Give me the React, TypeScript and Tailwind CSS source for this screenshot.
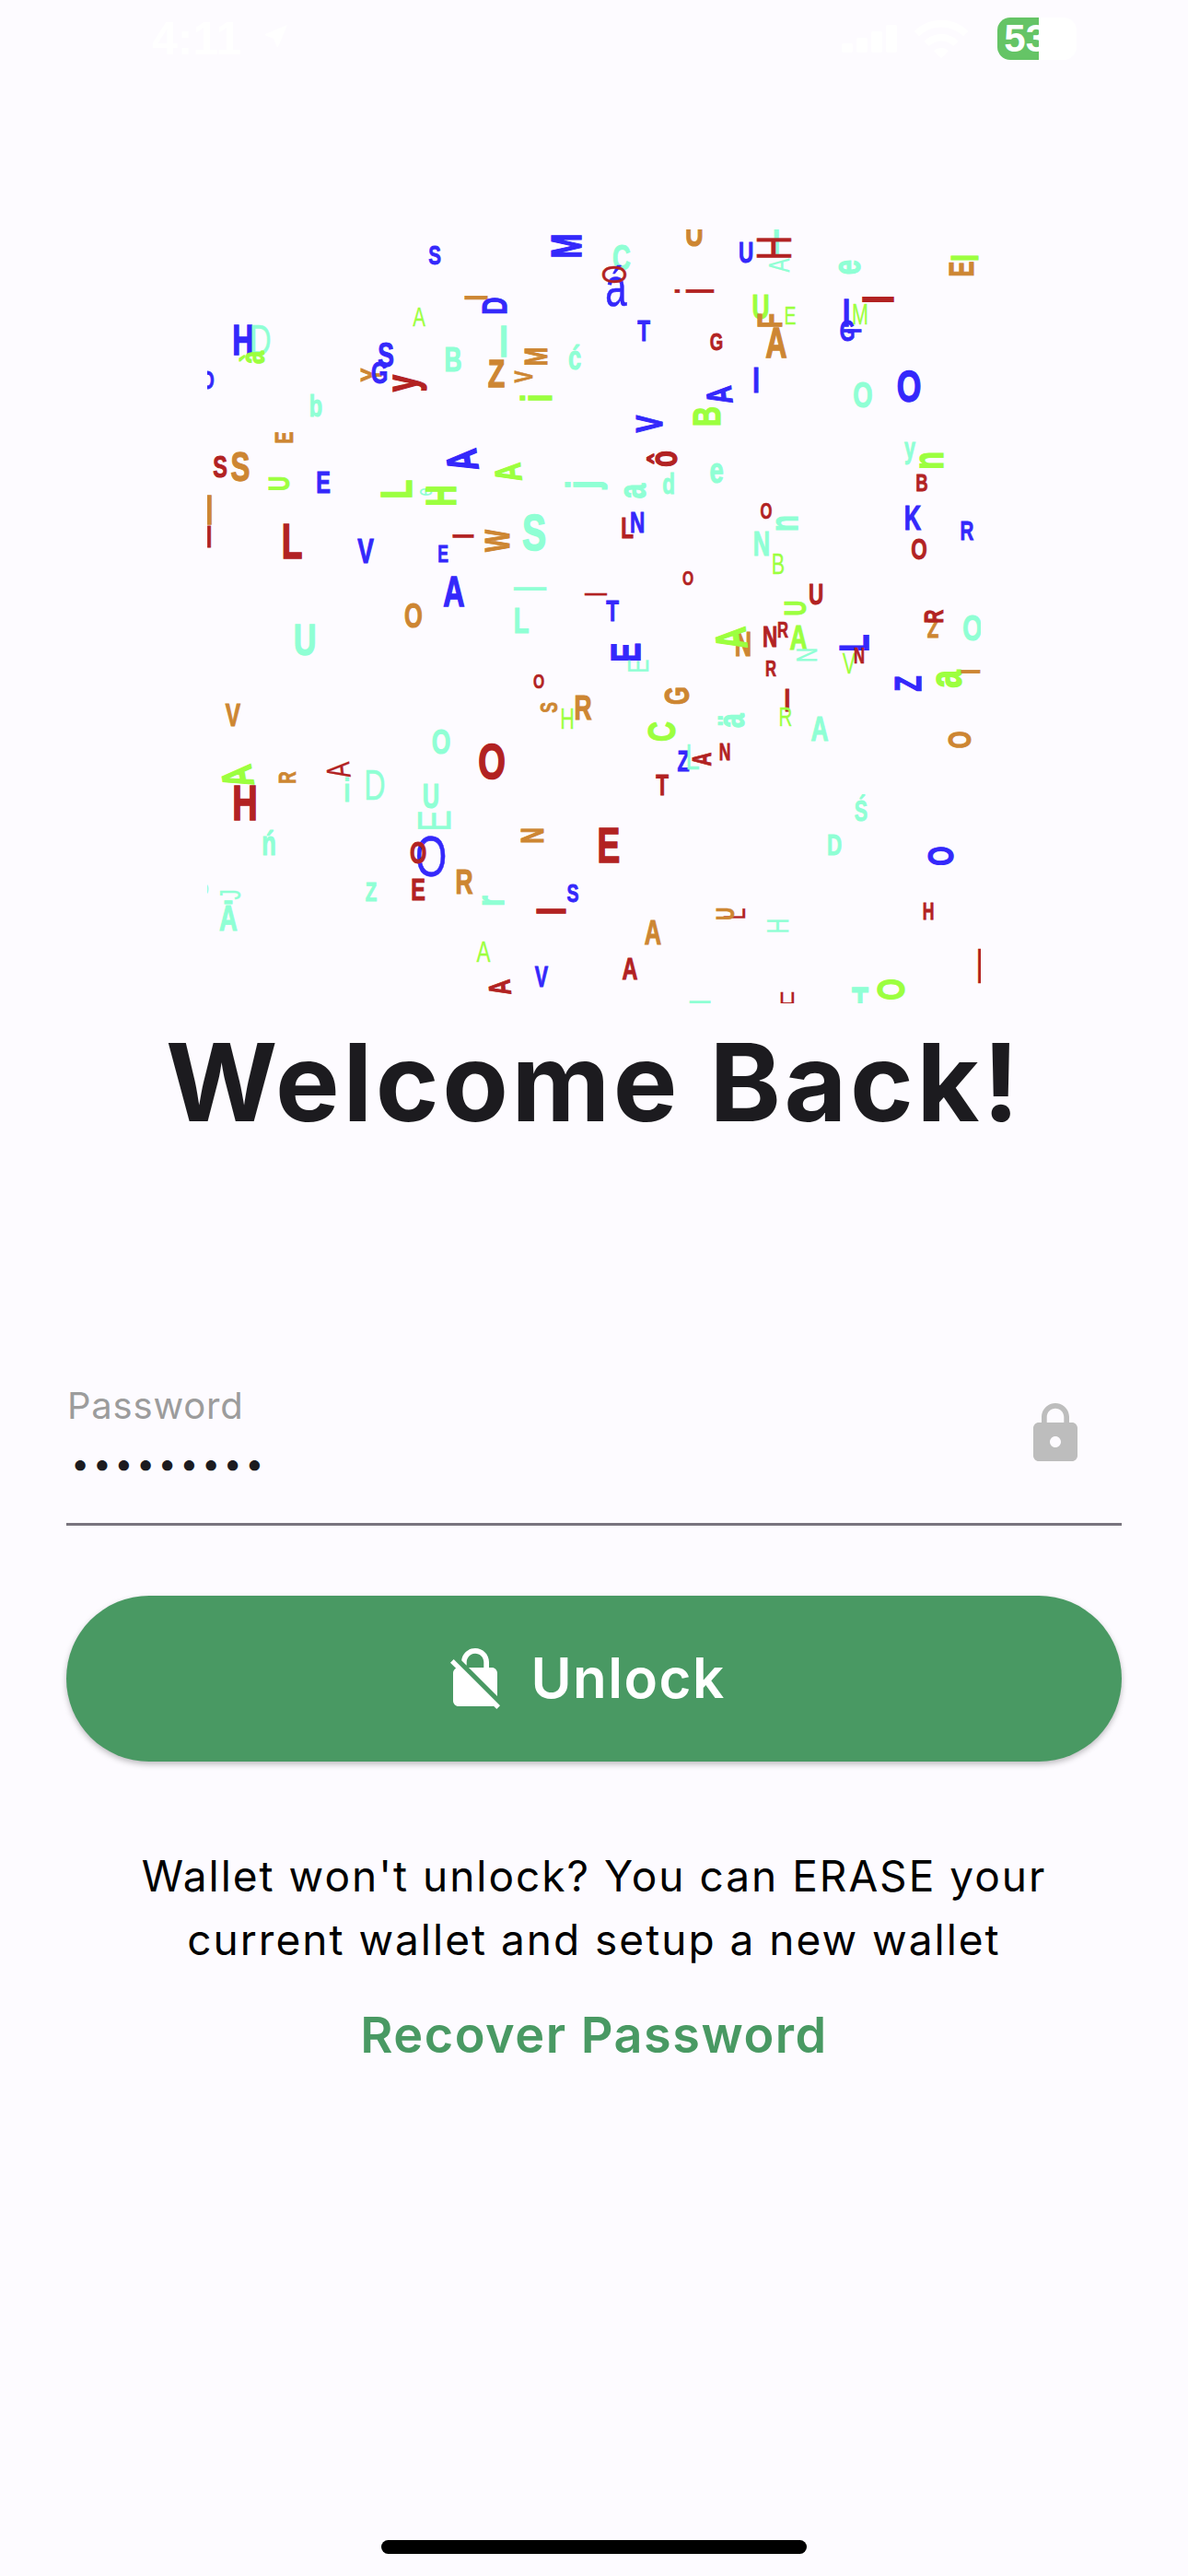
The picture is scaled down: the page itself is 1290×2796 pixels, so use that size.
import React from 'react';
import { MdLock, MdNoEncryption, MdWifi, MdNearMe } from 'react-icons/md';

// char, center x, center y, cap height, rotation, colour, bold
type Glyph = [string, number, number, number, number, string, number];

const colors: Record<string, string> = {
  b: '#3428fb',
  r: '#b22222',
  o: '#cd8632',
  a: '#8fffd4',
  g: '#9cff3f',
};

const glyphs: Glyph[] = [
  ['S', 472, 277, 21, 0, 'b', 1],
  ['M', 615, 267, 33, -90, 'b', 1],
  ['I', 517, 323, 25, -90, 'o', 1],
  ['D', 538, 332, 27, -90, 'b', 1],
  ['A', 455, 344, 21, 0, 'g', 0],
  ['H', 264, 369, 33, 0, 'b', 1],
  ['D', 283, 369, 33, 0, 'a', 0],
  ['à', 275, 388, 26, -90, 'g', 1],
  ['Y', 403, 407, 23, -90, 'o', 1],
  ['S', 419, 386, 27, 0, 'b', 1],
  ['G', 412, 405, 24, 0, 'b', 1],
  ['y', 446, 416, 34, -90, 'r', 1],
  ['B', 492, 391, 27, 0, 'a', 1],
  ['I', 547, 370, 35, 0, 'a', 1],
  ['Z', 539, 406, 31, 0, 'o', 1],
  ['M', 582, 387, 25, -90, 'o', 1],
  ['V', 569, 409, 20, -90, 'o', 1],
  ['ć', 624, 389, 26, 0, 'a', 1],
  ['i', 583, 432, 33, -90, 'g', 1],
  ['O', 225, 413, 20, 0, 'b', 1],
  ['b', 343, 441, 24, 0, 'a', 1],
  ['E', 309, 475, 20, -90, 'o', 1],
  ['S', 239, 507, 24, 0, 'r', 1],
  ['S', 261, 507, 32, 0, 'o', 1],
  ['U', 303, 525, 23, -90, 'g', 1],
  ['E', 351, 524, 24, 0, 'b', 1],
  ['L', 430, 531, 35, -90, 'g', 1],
  ['e', 464, 534, 17, -90, 'a', 0],
  ['H', 479, 538, 33, -90, 'g', 1],
  ['A', 502, 500, 34, -98, 'b', 1],
  ['A', 552, 513, 29, -96, 'g', 1],
  ['j', 633, 526, 34, -90, 'a', 1],
  ['I', 227, 554, 32, 0, 'o', 1],
  ['I', 227, 583, 24, 0, 'r', 1],
  ['L', 317, 588, 38, 0, 'r', 1],
  ['V', 397, 599, 27, 0, 'b', 1],
  ['E', 481, 602, 18, 0, 'b', 1],
  ['I', 503, 582, 23, -90, 'r', 1],
  ['W', 541, 587, 26, -90, 'o', 1],
  ['S', 580, 578, 40, 0, 'a', 1],
  ['A', 493, 642, 33, 0, 'b', 1],
  ['I', 576, 639, 36, -90, 'a', 0],
  ['I', 647, 645, 25, -90, 'r', 0],
  ['U', 754, 254, 28, 0, 'o', 1],
  ['C', 675, 280, 28, 0, 'a', 1],
  ['á', 669, 312, 43, 0, 'b', 0],
  ['O', 668, 298, 27, -90, 'r', 0],
  ['i', 756, 316, 41, -90, 'r', 0],
  ['U', 810, 274, 23, 0, 'b', 1],
  ['I', 843, 263, 30, 0, 'a', 1],
  ['H', 841, 269, 38, -90, 'r', 0],
  ['A', 846, 288, 23, -90, 'a', 0],
  ['e', 924, 290, 30, -90, 'a', 1],
  ['E', 1045, 292, 26, -90, 'o', 1],
  ['I', 1048, 280, 30, -90, 'g', 1],
  ['U', 826, 334, 27, 0, 'g', 1],
  ['F', 837, 348, 27, -90, 'o', 1],
  ['E', 858, 343, 20, 0, 'g', 0],
  ['A', 843, 372, 33, 0, 'o', 1],
  ['I', 919, 340, 30, 0, 'b', 1],
  ['G', 920, 360, 22, 0, 'b', 1],
  ['I', 926, 359, 20, -90, 'b', 1],
  ['M', 934, 342, 22, 0, 'g', 0],
  ['I', 953, 325, 35, -90, 'r', 1],
  ['T', 699, 359, 23, 0, 'b', 1],
  ['G', 778, 371, 19, 0, 'r', 1],
  ['I', 821, 413, 28, 0, 'b', 1],
  ['O', 937, 429, 28, 0, 'a', 1],
  ['O', 987, 419, 35, 0, 'b', 1],
  ['A', 781, 429, 28, -96, 'b', 1],
  ['B', 768, 452, 31, -90, 'g', 1],
  ['V', 705, 460, 29, -90, 'b', 1],
  ['ô', 721, 498, 30, -90, 'r', 1],
  ['e', 778, 514, 28, 0, 'a', 1],
  ['d', 726, 525, 23, 0, 'a', 1],
  ['a', 691, 533, 30, -90, 'a', 1],
  ['y', 988, 494, 22, 0, 'a', 1],
  ['n', 1013, 500, 33, -90, 'g', 1],
  ['B', 1001, 524, 19, 0, 'r', 1],
  ['L', 681, 573, 23, 0, 'r', 1],
  ['N', 692, 567, 23, 0, 'b', 1],
  ['O', 832, 556, 17, 0, 'r', 1],
  ['N', 827, 591, 26, 0, 'a', 1],
  ['n', 856, 568, 30, -90, 'a', 1],
  ['B', 845, 613, 22, 0, 'g', 0],
  ['K', 991, 563, 26, 0, 'b', 1],
  ['R', 1050, 576, 21, 0, 'b', 1],
  ['O', 998, 596, 23, 0, 'r', 1],
  ['O', 747, 628, 16, 0, 'r', 1],
  ['U', 886, 645, 23, 0, 'r', 1],
  ['U', 864, 660, 24, -90, 'g', 1],
  ['T', 665, 663, 23, 0, 'b', 1],
  ['Z', 1013, 682, 21, 0, 'o', 1],
  ['R', 1014, 669, 21, -90, 'r', 1],
  ['O', 1056, 682, 28, 0, 'a', 1],
  ['N', 807, 700, 26, 0, 'o', 1],
  ['A', 794, 693, 34, -96, 'g', 1],
  ['N', 836, 691, 23, 0, 'r', 1],
  ['R', 850, 685, 17, 0, 'r', 1],
  ['A', 867, 693, 27, 0, 'g', 1],
  ['N', 876, 711, 23, -90, 'a', 0],
  ['L', 928, 698, 32, -90, 'b', 1],
  ['V', 922, 721, 22, 0, 'g', 0],
  ['N', 933, 713, 17, 0, 'r', 1],
  ['E', 680, 708, 32, -90, 'b', 1],
  ['E', 693, 723, 23, -90, 'a', 0],
  ['R', 837, 727, 17, 0, 'r', 1],
  ['Z', 986, 742, 29, -90, 'b', 1],
  ['a', 1032, 737, 36, -90, 'g', 1],
  ['I', 1054, 729, 21, -90, 'o', 1],
  ['G', 736, 755, 26, -90, 'o', 1],
  ['I', 855, 760, 25, 0, 'r', 1],
  ['R', 853, 778, 21, 0, 'g', 0],
  ['ä', 794, 782, 29, -90, 'a', 1],
  ['C', 719, 794, 31, -90, 'g', 1],
  ['A', 890, 792, 27, 0, 'a', 1],
  ['O', 1042, 803, 25, -90, 'o', 1],
  ['N', 787, 817, 18, 0, 'r', 1],
  ['Z', 742, 827, 22, 0, 'b', 1],
  ['L', 752, 822, 28, 0, 'a', 0],
  ['A', 762, 824, 21, -90, 'r', 1],
  ['T', 719, 852, 23, 0, 'r', 1],
  ['Ś', 935, 881, 22, 0, 'a', 1],
  ['D', 906, 917, 23, 0, 'a', 1],
  ['O', 1022, 929, 28, -90, 'b', 1],
  ['E', 661, 918, 38, 0, 'r', 1],
  ['L', 798, 992, 24, -90, 'r', 0],
  ['U', 788, 992, 20, -90, 'o', 1],
  ['H', 845, 1005, 24, -90, 'a', 0],
  ['H', 1008, 990, 18, 0, 'r', 1],
  ['A', 709, 1013, 26, 0, 'o', 1],
  ['A', 684, 1052, 24, 0, 'r', 1],
  ['I', 1064, 1049, 39, 0, 'r', 0],
  ['I', 761, 1088, 22, -90, 'a', 1],
  ['H', 855, 1091, 26, 0, 'r', 0],
  ['T', 934, 1087, 30, 0, 'a', 1],
  ['O', 968, 1074, 31, -90, 'g', 1],
  ['O', 449, 669, 26, 0, 'o', 1],
  ['L', 566, 674, 28, 0, 'a', 1],
  ['U', 331, 694, 35, 0, 'a', 1],
  ['O', 585, 740, 16, 0, 'r', 1],
  ['S', 597, 768, 18, -90, 'o', 1],
  ['H', 616, 781, 22, 0, 'g', 0],
  ['R', 633, 769, 27, 0, 'o', 1],
  ['V', 253, 776, 25, 0, 'o', 1],
  ['O', 479, 806, 27, 0, 'a', 1],
  ['O', 534, 827, 39, 0, 'r', 1],
  ['H', 266, 872, 39, 0, 'r', 1],
  ['A', 258, 843, 34, -100, 'g', 1],
  ['R', 312, 844, 19, -90, 'o', 1],
  ['A', 368, 836, 26, -96, 'r', 0],
  ['i', 377, 858, 25, 0, 'a', 1],
  ['D', 407, 852, 33, 0, 'a', 0],
  ['U', 468, 865, 26, 0, 'a', 1],
  ['E', 472, 891, 36, -90, 'a', 0],
  ['N', 578, 907, 25, -90, 'o', 1],
  ['O', 468, 929, 45, 0, 'b', 0],
  ['O', 454, 926, 24, 0, 'r', 1],
  ['ń', 292, 916, 26, 0, 'a', 1],
  ['O', 222, 966, 12, 0, 'a', 0],
  ['J', 250, 971, 23, -90, 'a', 0],
  ['Ā', 248, 997, 28, 0, 'a', 1],
  ['Z', 403, 968, 21, 0, 'a', 1],
  ['E', 454, 966, 24, 0, 'r', 1],
  ['R', 504, 958, 27, 0, 'o', 1],
  ['r', 537, 978, 30, -90, 'a', 1],
  ['S', 622, 970, 20, 0, 'b', 1],
  ['I', 599, 989, 32, -90, 'r', 1],
  ['A', 525, 1033, 23, 0, 'g', 0],
  ['V', 588, 1061, 22, 0, 'b', 1],
  ['A', 543, 1072, 24, -96, 'r', 1],
];

// how far the ink centre sits below the cap-height centre, in em
const inkOffset = (ch: string) => {
  if ('yg'.includes(ch)) return 0.2;
  if ('aecmnorsuvwxz'.includes(ch)) return 0.1;
  return 0;
};

const LetterCloud = () => (
  <div className="relative w-[840px] h-[840px] overflow-hidden font-['Liberation_Sans',sans-serif]">
    {glyphs.map(([ch, x, y, h, rot, color, bold], i) => (
      <span
        key={i}
        className="absolute leading-none whitespace-pre"
        style={{
          left: x - 225,
          top: y - 249,
          fontSize: h / 0.716,
          color: colors[color],
          fontWeight: bold ? 700 : 400,
          WebkitTextStroke: bold ? '0.03em' : '0.01em',
          transform: `translate(-50%, -50%) rotate(${rot}deg) scaleX(0.7) translateY(${-inkOffset(ch)}em)`,
        }}
      >
        {ch}
      </span>
    ))}
  </div>
);

const StatusBar = () => (
  <div className="flex items-center w-full h-[172px] pl-[165px] pb-[88px] text-white">
    <span className="font-['Liberation_Sans',sans-serif] font-bold text-[50px] leading-none">4:11</span>
    <MdNearMe className="ml-[22px] mt-[-6px]" size={32} />
    <div className="flex items-end gap-[4px] ml-[598px] h-[30px]">
      <div className="w-[12px] h-[10px] bg-white rounded-[2px]" />
      <div className="w-[12px] h-[16px] bg-white rounded-[2px]" />
      <div className="w-[12px] h-[23px] bg-white rounded-[2px]" />
      <div className="w-[12px] h-[30px] bg-white rounded-[2px]" />
    </div>
    <MdWifi className="ml-[16px]" size={64} />
    <div className="relative w-[86px] h-[46px] ml-[29px] bg-white rounded-[14px] overflow-hidden">
      <div className="w-[45px] h-full bg-[#65c466]" />
      <span className="absolute left-[7px] top-[2px] font-['Liberation_Sans',sans-serif] font-bold text-[42px] leading-none">53</span>
    </div>
  </div>
);

export default function App() {
  return (
    <div className="flex flex-col items-center w-[1290px] h-[2796px] bg-[#fdfbff] font-['Inter',sans-serif]">
      <StatusBar />
      <div className="mt-[77px]">
        <LetterCloud />
      </div>
      <h1 className="mt-[16px] text-[117px] leading-[140px] font-bold text-[#1c1b1f] tracking-[3.6px]">Welcome Back!</h1>

      <div className="flex justify-between w-[1146px] h-[156px] mt-[255px] pr-[36px] border-b-[3px] border-[#79747e]">
        <div className="flex flex-col">
          <span className="mt-[2px] text-[40px] leading-[48px] text-[#9c9c9c] tracking-[0.8px] pl-[1px]">Password</span>
          <span className="text-[36px] leading-[60px] mt-[8px] text-[#1c1b1f] tracking-[3.4px] pl-[5px]">•••••••••</span>
        </div>
        <MdLock className="mt-[20px] text-[#bdbdbd]" size={72} />
      </div>

      <button className="flex items-center justify-center gap-[24px] w-[1146px] h-[180px] mt-[76px] pr-[22px] rounded-full bg-[#499963] text-white shadow-[0_3px_6px_rgba(0,0,0,0.25)]">
        <MdNoEncryption size={72} />
        <span className="mt-[-2px] text-[60px] leading-[72px] font-semibold tracking-[1.5px]">Unlock</span>
      </button>

      <p className="mt-[90px] text-center text-[46px] leading-[69px] text-black tracking-[2px]">
        Wallet won't unlock? You can ERASE your
        <br />
        current wallet and setup a new wallet
      </p>
      <span className="mt-[37px] text-[54px] leading-[64px] font-semibold text-[#499963] tracking-[1.5px]">Recover Password</span>

      <div className="w-[462px] h-[15px] mt-auto mb-[24px] rounded-full bg-black" />
    </div>
  );
}
